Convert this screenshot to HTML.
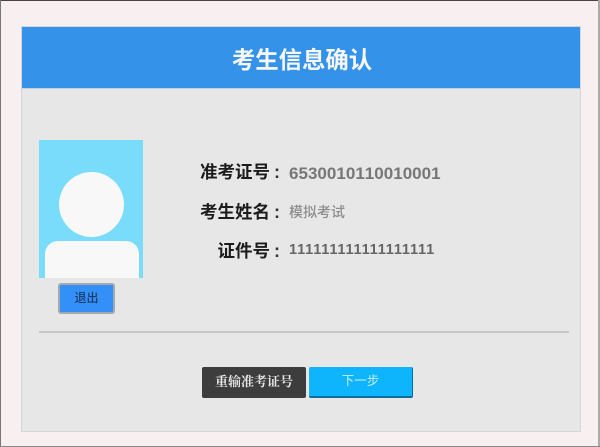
<!DOCTYPE html>
<html>
<head>
<meta charset="utf-8">
<style>
html,body{margin:0;padding:0;width:600px;height:447px;overflow:hidden;background:#f8eff0;}
body{position:relative;font-family:"Liberation Sans","Noto Sans CJK SC",sans-serif;}
div{position:absolute;box-sizing:border-box;white-space:nowrap;}
#w{left:0;top:0;width:600px;height:447px;filter:blur(.35px);}
.lbl{font-size:17.5px;line-height:20px;color:#1c1c1c;font-weight:700;text-align:right;left:170px;width:100px;}
.colon{font-size:18px;line-height:20px;color:#333;left:274px;font-weight:700;}
</style>
</head>
<body>
<div id="w">
<div style="left:21px;top:26px;width:560px;height:406px;background:#e7e7e7;border:1px solid #d4d6da"></div>
<div style="left:22px;top:27px;width:558px;height:61px;background:#3492e9"></div>
<div style="left:22px;top:88px;width:558px;height:1px;background:#bcd0e0"></div>
<div style="left:23px;top:45px;width:558px;height:30px;line-height:30px;text-align:center;color:#f7f7f7;font-size:23.4px;font-weight:700">考生信息确认</div>

<div style="left:39px;top:140px;width:104px;height:138px;background:#78dcfa;overflow:hidden">
  <div style="left:20px;top:32px;width:65px;height:65px;border-radius:50%;background:#f8f8f8"></div>
  <div style="left:6px;top:101px;width:94px;height:40px;border-radius:13px 13px 0 0;background:#f8f8f8"></div>
</div>
<div style="left:58px;top:283px;width:57px;height:31px;background:#3290f8;border:2px solid #a5a9ad;border-radius:3px;line-height:27px;text-align:center;font-size:12px;color:#1d3a66;font-weight:500">退出</div>

<div class="lbl" style="top:162px">准考证号</div><div class="colon" style="top:162px">:</div>
<div style="left:289px;top:164px;font-size:17px;line-height:20px;color:#777;font-weight:700;letter-spacing:.02px;font-kerning:none">6530010110010001</div>
<div class="lbl" style="top:202px">考生姓名</div><div class="colon" style="top:202px">:</div>
<div style="left:289px;top:203px;font-size:14px;line-height:18px;color:#8d8d8d;font-weight:500">模拟考试</div>
<div class="lbl" style="top:241px">证件号</div><div class="colon" style="top:241px">:</div>
<div style="left:289px;top:241px;font-size:14.5px;line-height:18px;color:#666;font-weight:700;font-kerning:none">111111111111111111</div>

<div style="left:39px;top:331px;width:530px;height:2px;background:#c5c6c6"></div>

<div style="left:202px;top:367px;width:104px;height:31px;background:#3d3d3d;border-radius:2px;line-height:30px;text-align:center;color:#e8e8e8;font-size:13px;font-family:'Liberation Serif','Noto Serif CJK SC',serif;font-weight:700">重输准考证号</div>
<div style="left:309px;top:367px;width:104px;height:31px;background:#0eb4fc;border-bottom:2px solid #0a6e9e;border-right:1px solid #0a6e9e;border-radius:2px;line-height:28px;text-align:center;color:#c9eefc;font-size:12.5px">下一步</div>
</div>
<div style="left:0;top:0;width:600px;height:1px;background:#4a4444"></div>
<div style="left:0;top:0;width:1px;height:447px;background:#777"></div>
<div style="left:598px;top:0;width:2px;height:447px;background:#aaa"></div>
<div style="left:0;top:446px;width:600px;height:1px;background:#888"></div>
</body>
</html>
